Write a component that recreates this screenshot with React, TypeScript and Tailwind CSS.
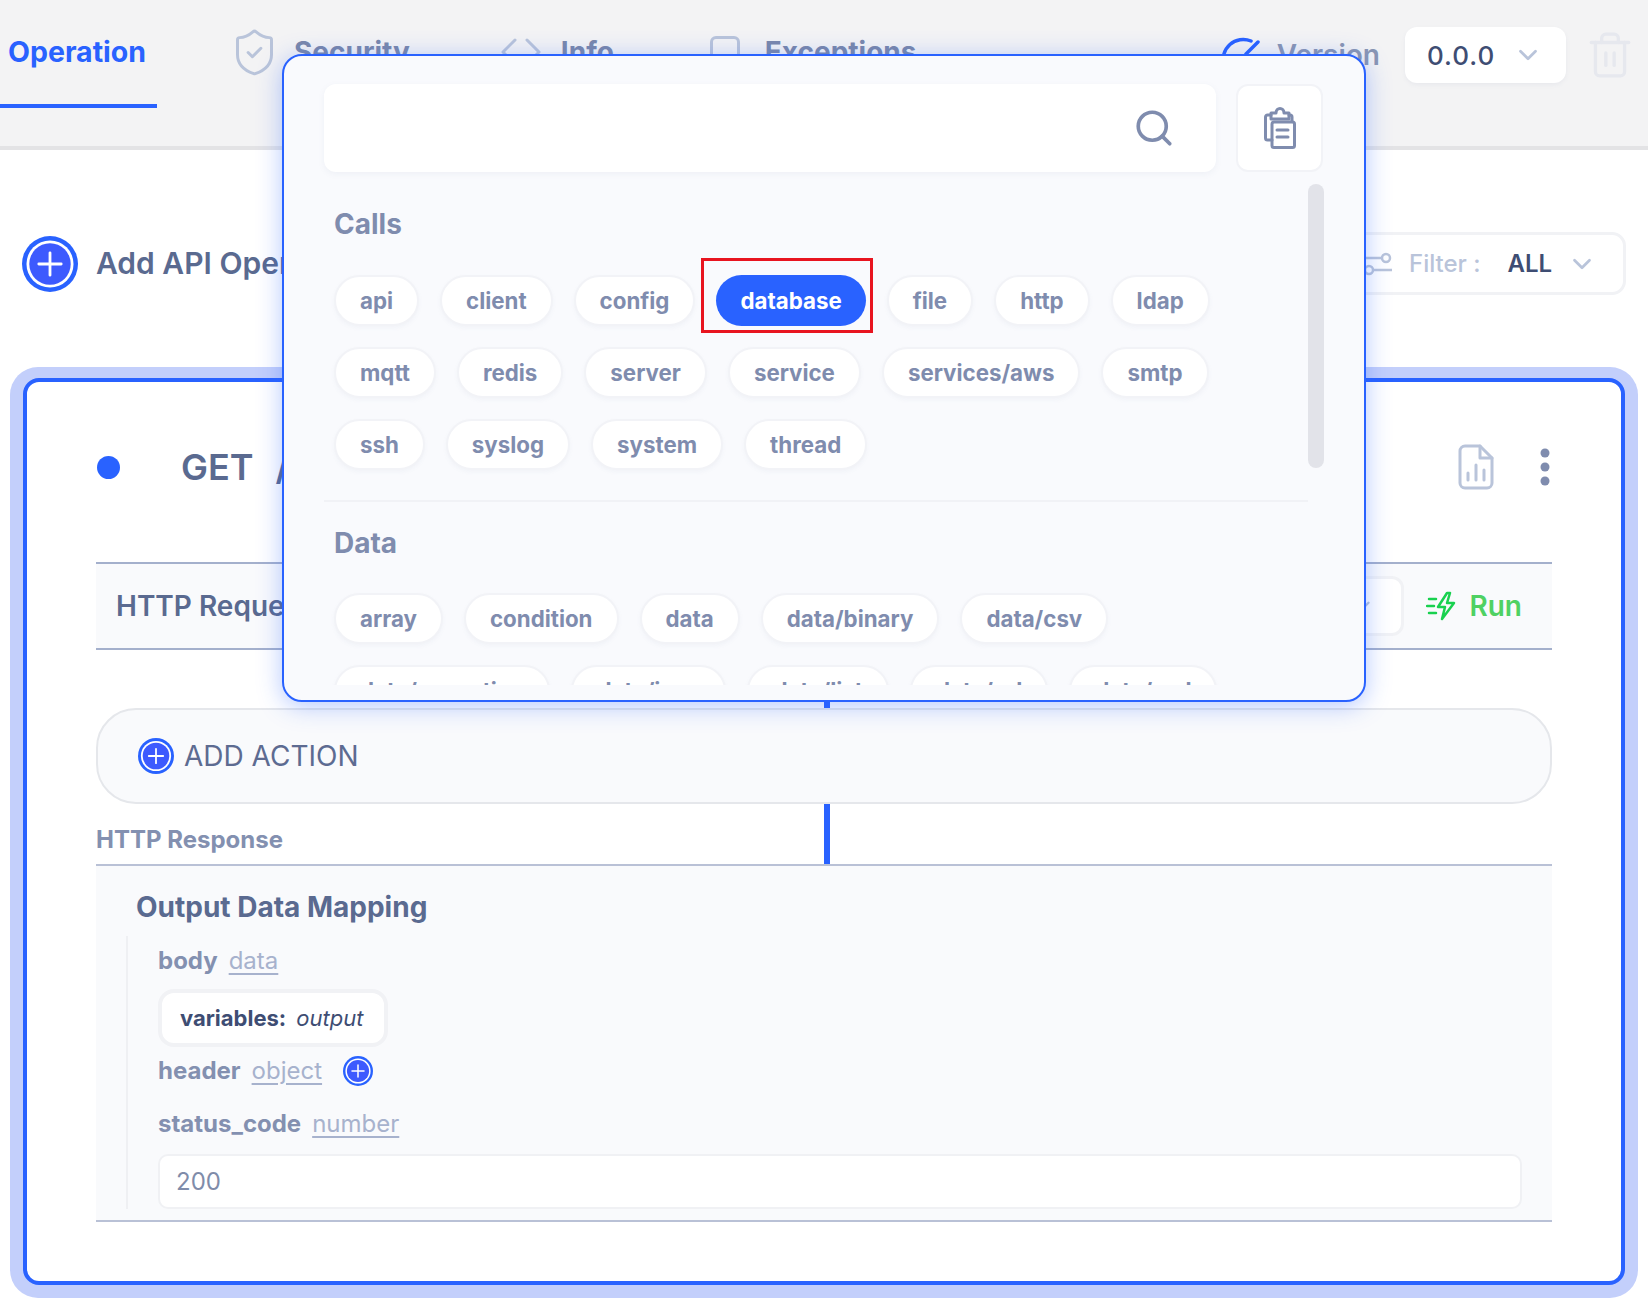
import { ChevronDown, Search, ShieldCheck, Trash2 } from 'lucide-react';

const callChips = ['api', 'client', 'config', 'database', 'file', 'http', 'ldap', 'mqtt', 'redis', 'server', 'service', 'services/aws', 'smtp', 'ssh', 'syslog', 'system', 'thread'];
const dataChips = ['array', 'condition', 'data', 'data/binary', 'data/csv', 'data/exception', 'data/json', 'data/list', 'data/url', 'data/xml'];

function PlusCircle({ size }: { size: number }) {
  return (
    <svg width={size} height={size} viewBox="0 0 100 100" className="shrink-0">
      <circle cx="50" cy="50" r="50" fill="#2962ff" />
      <circle cx="50" cy="50" r="42" fill="#ffffff" />
      <circle cx="50" cy="50" r="37" fill="#3d5afe" />
      <path d="M50 30v40M30 50h40" stroke="#ffffff" strokeWidth="5" strokeLinecap="round" />
    </svg>
  );
}

function Chip({ label }: { label: string }) {
  if (label === 'database') {
    return (
      <div className="relative flex h-[51px] items-center rounded-full bg-[#2962ff] px-[24px] text-[22.3px] font-bold text-white">
        {label}
        <div className="absolute -bottom-[7px] -left-[15px] -right-[7px] -top-[17px] border-[3px] border-[#e8141f]" />
      </div>
    );
  }
  return (
    <div className="flex h-[51px] items-center rounded-full border-2 border-[#f2f3f7] bg-white px-[24px] text-[22.3px] font-bold text-[#7f8cae] shadow-[0_2px_4px_rgba(120,130,170,0.06)]">
      {label}
    </div>
  );
}

function TypeLabel({ name, type }: { name: string; type: string }) {
  return (
    <div className="flex items-center gap-[11px] text-[24px]">
      <span className="font-bold text-[#8390b0]">{name}</span>
      <span className="text-[#a7b2cd] underline underline-offset-[4px]">{type}</span>
    </div>
  );
}

function ActionPicker() {
  return (
    <div className="absolute left-[282px] top-[54px] h-[648px] w-[1084px] rounded-[20px] border-2 border-[#2962ff] bg-[#f9fafd] shadow-[0_4px_24px_rgba(41,98,255,0.35)]">
      <div className="flex gap-[20px] pl-[40px] pt-[28px]">
        <div className="flex h-[88px] w-[892px] items-center justify-end rounded-[12px] bg-white pr-[41px] shadow-[0_2px_6px_rgba(120,130,170,0.08)]">
          <Search size={42} strokeWidth={2.1} className="text-[#7f8cae]" />
        </div>
        <div className="flex h-[88px] w-[87px] items-center justify-center rounded-[12px] border-2 border-[#f2f3f7] bg-white">
          <svg width="32" height="42" viewBox="0 0 32 42" fill="none" stroke="#7f8cae" strokeWidth="3" strokeLinejoin="round" strokeLinecap="round">
            <path d="M8 33H3.500a2 2 0 0 1-2-2V10a2 2 0 0 1 2-2H7" />
            <path d="M25 8h1a2 2 0 0 1 2 2v4" />
            <path d="M7 12V6h5c0-3 2-4.500 4-4.500s4 1.500 4 4.500h5v6z" />
            <rect x="8" y="15" width="22.500" height="25.500" rx="2" />
            <path d="M13 23h11M13 30h11" />
          </svg>
        </div>
      </div>
      <div className="relative ml-[40px] h-[513px] w-[1000px] overflow-hidden">
        <div className="absolute right-0 top-[12px] h-[284px] w-[16px] rounded-full bg-[#e2e3e9]" />
        <div className="w-[984px]">
          <div className="mt-[24px] flex h-[56px] items-center pl-[10px] text-[28px] font-bold text-[#7f8cae]">Calls</div>
          <div className="mb-[30px] mt-[23px] flex w-[930px] flex-wrap gap-x-[21px] gap-y-[21px] pl-[10px]">
            {callChips.map((chip) => <Chip key={chip} label={chip} />)}
          </div>
          <div className="h-[2px] bg-[#f1f2f6]" />
          <div className="mt-[13px] flex h-[56px] items-center pl-[10px] text-[28px] font-bold text-[#7f8cae]">Data</div>
          <div className="mt-[22px] flex w-[930px] flex-wrap gap-x-[21px] gap-y-[21px] pl-[10px]">
            {dataChips.map((chip) => <Chip key={chip} label={chip} />)}
          </div>
        </div>
      </div>
    </div>
  );
}

export default function App() {
  return (
    <div className="relative h-[1308px] w-[1648px] overflow-hidden bg-white font-['Inter',sans-serif]">
      <header className="flex h-[150px] items-start border-b-4 border-[#e3e3e5] bg-[#f3f3f4] pr-[13px]">
        <div className="flex h-[108px] w-[157px] items-center border-b-4 border-[#2962ff] pl-[8px] text-[28.5px] font-bold text-[#2962ff]">Operation</div>
        <div className="ml-[72px] flex h-[104px] items-center gap-[14px] text-[28px] font-bold text-[#7a88ab]">
          <ShieldCheck size={51} strokeWidth={1.4} className="text-[#b9c4da]" />
          Security
        </div>
        <div className="ml-[90px] flex h-[104px] items-center gap-[19px] text-[28px] font-bold text-[#7a88ab]">
          <svg width="42" height="36" viewBox="0 0 42 36" fill="none" stroke="#b9c4da" strokeWidth="3" strokeLinecap="round" strokeLinejoin="round">
            <path d="M15 6 3 18l12 12M27 6l12 12-12 12" />
          </svg>
          Info
        </div>
        <div className="ml-[96px] flex h-[104px] items-center gap-[25px] text-[28px] font-bold text-[#7a88ab]">
          <div className="h-[32px] w-[30px] rounded-[6px] border-[3px] border-[#b9c4da]" />
          Exceptions
        </div>
        <div className="ml-auto flex h-[110px] items-center text-[28px] font-semibold text-[#8a96b3]">
          <svg width="40" height="40" viewBox="0 0 40 40" fill="none" stroke="#2962ff" strokeWidth="3.500" strokeLinecap="round" className="mr-[15px]">
            <path d="M2 30A20 20 0 0 1 29 6M36 7 24 19" />
          </svg>
          Version
          <div className="ml-[25px] flex h-[56px] w-[161px] items-center gap-[18px] rounded-[12px] bg-white pl-[22px] text-[26px] font-medium tracking-[1px] text-[#3e4d73] shadow-[0_2px_4px_rgba(120,130,170,0.08)]">
            0.0.0
            <ChevronDown size={30} strokeWidth={2.2} className="text-[#b9c4da]" />
          </div>
          <Trash2 size={50} strokeWidth={1.6} className="ml-[19px] text-[#e6e8ee]" />
        </div>
      </header>

      <div className="ml-[22px] mr-[22px] mt-[82px] flex h-[63px] items-center">
        <PlusCircle size={56} />
        <span className="ml-[18px] text-[30px] font-semibold text-[#5a6a90]">Add API Operation</span>
        <div className="ml-auto flex h-[63px] w-[289px] items-center rounded-[14px] border-[3px] border-[#f1f2f5] bg-white pl-[22px] text-[24px]">
          <svg width="32" height="26" viewBox="0 0 32 26" fill="none" stroke="#b9c4da" strokeWidth="2.500" className="shrink-0">
            <circle cx="24" cy="7" r="4" />
            <circle cx="7" cy="19" r="4" />
            <path d="M2 7h18M11 19h19" />
          </svg>
          <span className="ml-[15px] font-medium text-[#b9c4da]">Filter :</span>
          <span className="ml-[27px] font-semibold text-[#3e4d73]">ALL</span>
          <ChevronDown size={30} strokeWidth={2.2} className="ml-[15px] text-[#b9c4da]" />
        </div>
      </div>

      <div className="mx-[10px] mt-[72px] h-[931px] rounded-[28px] bg-[#c3cffb] px-[13px] pb-[13px] pt-[11px]">
        <div className="h-[907px] rounded-[16px] border-4 border-[#2962ff] bg-white">
          <div className="mx-[69px] flex h-[170px] items-center">
            <div className="ml-[1px] h-[23px] w-[23px] rounded-full bg-[#2962ff]" />
            <span className="ml-[61px] text-[36px] font-semibold text-[#5a6a90]">GET</span>
            <span className="ml-[22px] text-[36px] font-semibold text-[#5a6a90]">/api</span>
            <svg width="36" height="46" viewBox="0 0 36 46" fill="none" stroke="#b9c4da" strokeWidth="3" strokeLinecap="round" strokeLinejoin="round" className="ml-auto">
              <path d="M22 2H7a5 5 0 0 0-5 5v32a5 5 0 0 0 5 5h22a5 5 0 0 0 5-5V14z" />
              <path d="M22 2v12h12" />
              <path d="M10 36v-7M18 36V21M26 36V26" />
            </svg>
            <svg width="12" height="38" viewBox="0 0 12 38" fill="#7f8cae" className="ml-[45px] mr-[1px]">
              <circle cx="6" cy="5" r="4.500" />
              <circle cx="6" cy="19" r="4.500" />
              <circle cx="6" cy="33" r="4.500" />
            </svg>
          </div>

          <div className="mx-[69px] mt-[10px] flex h-[88px] items-center border-y-2 border-[#a4b0cc] bg-[#f9fafc] pl-[20px] pr-[30px]">
            <span className="text-[28px] font-semibold text-[#5a6a90]">HTTP Request</span>
            <div className="ml-auto flex h-[60px] w-[200px] items-center justify-end rounded-[12px] border-[3px] border-[#f1f2f5] bg-white pr-[26px]">
              <ChevronDown size={26} strokeWidth={2.2} className="text-[#b9c4da]" />
            </div>
            <svg width="34" height="30" viewBox="0 0 34 30" fill="none" stroke="#19d14f" strokeWidth="2.500" strokeLinejoin="round" strokeLinecap="round" className="ml-[22px]">
              <path d="M21 2 12 16h7l-3 12 12-16h-7l3-10z" />
              <path d="M3 8h7M1 15h7M3 22h7" />
            </svg>
            <span className="ml-[9px] text-[28px] font-semibold text-[#4fd163]">Run</span>
          </div>

          <div className="ml-[797px] h-[58px] w-[6px] bg-[#2962ff]" />

          <div className="mx-[69px] flex h-[96px] items-center rounded-[40px] border-2 border-[#e5e7eb] bg-[#f9fafc] pl-[40px] text-[28px] text-[#5d6b91]">
            <PlusCircle size={36} />
            <span className="ml-[10px]">ADD ACTION</span>
          </div>

          <div className="mx-[69px] flex h-[60px]">
            <div className="flex w-[728px] items-end pb-[6px] text-[24px] font-bold text-[#8390b0]">HTTP Response</div>
            <div className="w-[6px] bg-[#2962ff]" />
          </div>

          <div className="mx-[69px] border-y-2 border-[#b9c1d6] bg-[#f9fafc] pb-[11px]">
            <div className="flex h-[70px] items-center pl-[40px] pt-[12px] text-[28px] font-bold text-[#5a6a90]">Output Data Mapping</div>
            <div className="ml-[30px] mr-[30px] border-l-2 border-[#eff0f3] pl-[30px]">
              <div className="flex h-[50px] items-center"><TypeLabel name="body" type="data" /></div>
              <div className="mt-[3px] flex h-[58px] w-[230px] items-center rounded-[16px] border-4 border-[#f1f2f5] bg-white pl-[18px] text-[22px] text-[#3e4d73]">
                <span className="font-bold">variables:</span>
                <span className="ml-[10px] italic">output</span>
              </div>
              <div className="flex h-[47px] items-center">
                <TypeLabel name="header" type="object" />
                <div className="ml-[21px]"><PlusCircle size={30} /></div>
              </div>
              <div className="flex h-[59px] items-center"><TypeLabel name="status_code" type="number" /></div>
              <div className="mt-[1px] flex h-[55px] items-center rounded-[10px] border-2 border-[#f0f1f4] bg-white pl-[16px] text-[24px] text-[#7f8caa]">200</div>
            </div>
          </div>
        </div>
      </div>

      <ActionPicker />
    </div>
  );
}
